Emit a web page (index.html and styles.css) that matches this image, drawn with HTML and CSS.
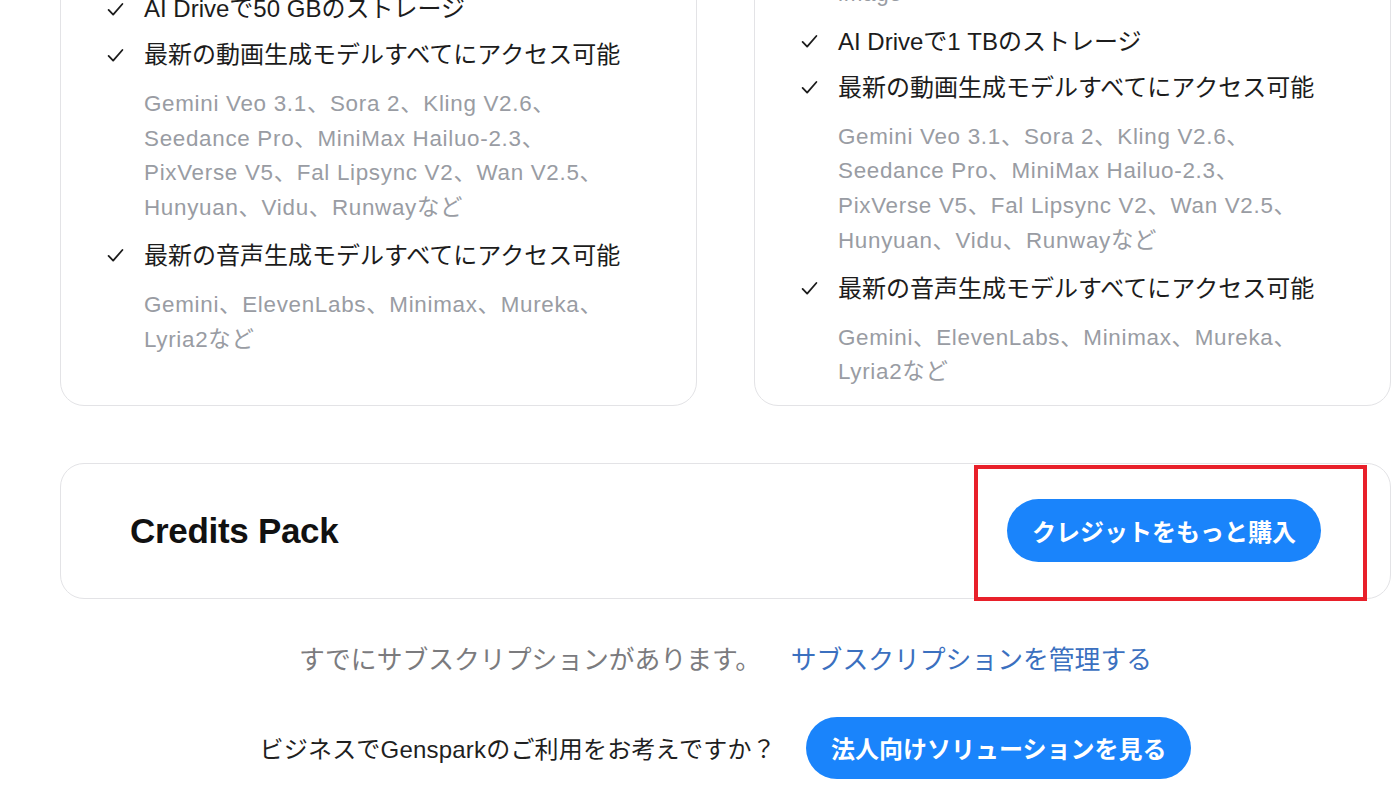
FILE: index.html
```html
<!DOCTYPE html>
<html lang="ja">
<head>
<meta charset="utf-8">
<title>Plans</title>
<link rel="stylesheet" href="styles.css">
</head>
<body>
<div class="page">
  <div class="plans">
    <div class="plan plan-left">
      <ul class="features">
        <li class="feature">
          <div class="main"><svg class="check" viewBox="0 0 16 16"><path d="M1.5 8.4 L5.8 12.8 L14.5 2.8"/></svg><span>AI Driveで50 GBのストレージ</span></div>
        </li>
        <li class="feature">
          <div class="main"><svg class="check" viewBox="0 0 16 16"><path d="M1.5 8.4 L5.8 12.8 L14.5 2.8"/></svg><span>最新の動画生成モデルすべてにアクセス可能</span></div>
          <p class="sub">Gemini Veo 3.1、Sora 2、Kling V2.6、<br>Seedance Pro、MiniMax Hailuo-2.3、<br>PixVerse V5、Fal Lipsync V2、Wan V2.5、<br>Hunyuan、Vidu、Runwayなど</p>
        </li>
        <li class="feature">
          <div class="main"><svg class="check" viewBox="0 0 16 16"><path d="M1.5 8.4 L5.8 12.8 L14.5 2.8"/></svg><span>最新の音声生成モデルすべてにアクセス可能</span></div>
          <p class="sub">Gemini、ElevenLabs、Minimax、Mureka、<br>Lyria2など</p>
        </li>
      </ul>
    </div>
    <div class="plan plan-right">
      <ul class="features">
        <li class="feature">
          <p class="sub">image</p>
        </li>
        <li class="feature">
          <div class="main"><svg class="check" viewBox="0 0 16 16"><path d="M1.5 8.4 L5.8 12.8 L14.5 2.8"/></svg><span>AI Driveで1 TBのストレージ</span></div>
        </li>
        <li class="feature">
          <div class="main"><svg class="check" viewBox="0 0 16 16"><path d="M1.5 8.4 L5.8 12.8 L14.5 2.8"/></svg><span>最新の動画生成モデルすべてにアクセス可能</span></div>
          <p class="sub">Gemini Veo 3.1、Sora 2、Kling V2.6、<br>Seedance Pro、MiniMax Hailuo-2.3、<br>PixVerse V5、Fal Lipsync V2、Wan V2.5、<br>Hunyuan、Vidu、Runwayなど</p>
        </li>
        <li class="feature">
          <div class="main"><svg class="check" viewBox="0 0 16 16"><path d="M1.5 8.4 L5.8 12.8 L14.5 2.8"/></svg><span>最新の音声生成モデルすべてにアクセス可能</span></div>
          <p class="sub">Gemini、ElevenLabs、Minimax、Mureka、<br>Lyria2など</p>
        </li>
      </ul>
    </div>
  </div>

  <div class="credits">
    <h2 class="credits-title">Credits Pack</h2>
    <button class="btn btn-credits">クレジットをもっと購入</button>
    <div class="highlight"></div>
  </div>

  <p class="manage">
    <span class="manage-text">すでにサブスクリプションがあります。</span>
    <a class="manage-link" href="#">サブスクリプションを管理する</a>
  </p>

  <div class="business">
    <span class="business-text">ビジネスでGensparkのご利用をお考えですか？</span>
    <button class="btn btn-business">法人向けソリューションを見る</button>
  </div>
</div>
</body>
</html>
```

FILE: styles.css
```css
* { box-sizing: border-box; }

html, body {
  margin: 0;
  padding: 0;
  background: #ffffff;
}

body {
  font-family: "Liberation Sans", "Noto Sans CJK JP", sans-serif;
  color: #1f1f1f;
  width: 1397px;
  height: 793px;
  overflow: hidden;
}

.page {
  padding: 0 6px 0 60px;
  margin-top: -40px;
}

.plans {
  display: grid;
  grid-template-columns: 1fr 1fr;
  column-gap: 57px;
}

.plan {
  border: 1px solid #e3e3e6;
  border-radius: 24px;
  padding: 0 20px 13px 46px;
  background: #fff;
}

.plan-left { padding-top: 30px; }
.plan-right { padding-top: 16px; }

.features {
  list-style: none;
  margin: 0;
  padding: 0;
  display: flex;
  flex-direction: column;
  gap: 10px;
}

.main {
  display: flex;
  align-items: center;
  font-size: 24px;
  line-height: 36px;
  color: #1c1c1c;
  white-space: nowrap;
}

.check {
  width: 17px;
  height: 17px;
  margin-right: 20px;
  flex: none;
  fill: none;
  stroke: #1c1c1c;
  stroke-width: 1.7;
  stroke-linecap: round;
  stroke-linejoin: round;
}

.sub {
  margin: 14px 0 2px 37px;
  font-size: 22.4px;
  letter-spacing: 0.7px;
  line-height: 34.7px;
  color: #999ca3;
  white-space: nowrap;
}

.feature:first-child .sub { margin-top: 0; }

.credits {
  position: relative;
  margin-top: 57px;
  height: 136px;
  border: 1px solid #e3e3e6;
  border-radius: 24px;
  display: flex;
  align-items: center;
  justify-content: space-between;
  padding: 0 69px 0 69px;
}

.credits-title {
  margin: 0;
  font-family: "Liberation Sans", Arial, sans-serif;
  font-size: 35px;
  font-weight: 700;
  color: #111;
  letter-spacing: -0.3px;
}

.btn {
  border: none;
  border-radius: 999px;
  background: #1a84fb;
  color: #fff;
  font-family: "Noto Sans CJK JP", sans-serif;
  font-weight: 700;
  font-size: 24px;
  height: 63px;
  padding: 0 25px;
  white-space: nowrap;
  cursor: pointer;
}

.btn-credits { width: 314px; }

.highlight {
  position: absolute;
  left: 913px;
  top: 1px;
  width: 393px;
  height: 136px;
  border: 4px solid #e8202a;
  pointer-events: none;
}

.manage {
  margin: 41px 0 0 0;
  text-align: center;
  font-size: 25.8px;
  line-height: 36px;
  font-family: "Noto Sans CJK JP", sans-serif;
  white-space: nowrap;
}

.manage-text { color: #7b7b7e; }

.manage-link {
  color: #3b70bf;
  text-decoration: none;
  margin-left: 24px;
}

.business {
  margin-top: 41px;
  display: flex;
  justify-content: center;
  align-items: center;
  gap: 30px;
}

.business-text {
  font-size: 24px;
  letter-spacing: 0.2px;
  color: #1f1f1f;
  white-space: nowrap;
}

.btn-business {
  height: 62px;
  padding: 0 25px;
}
```
